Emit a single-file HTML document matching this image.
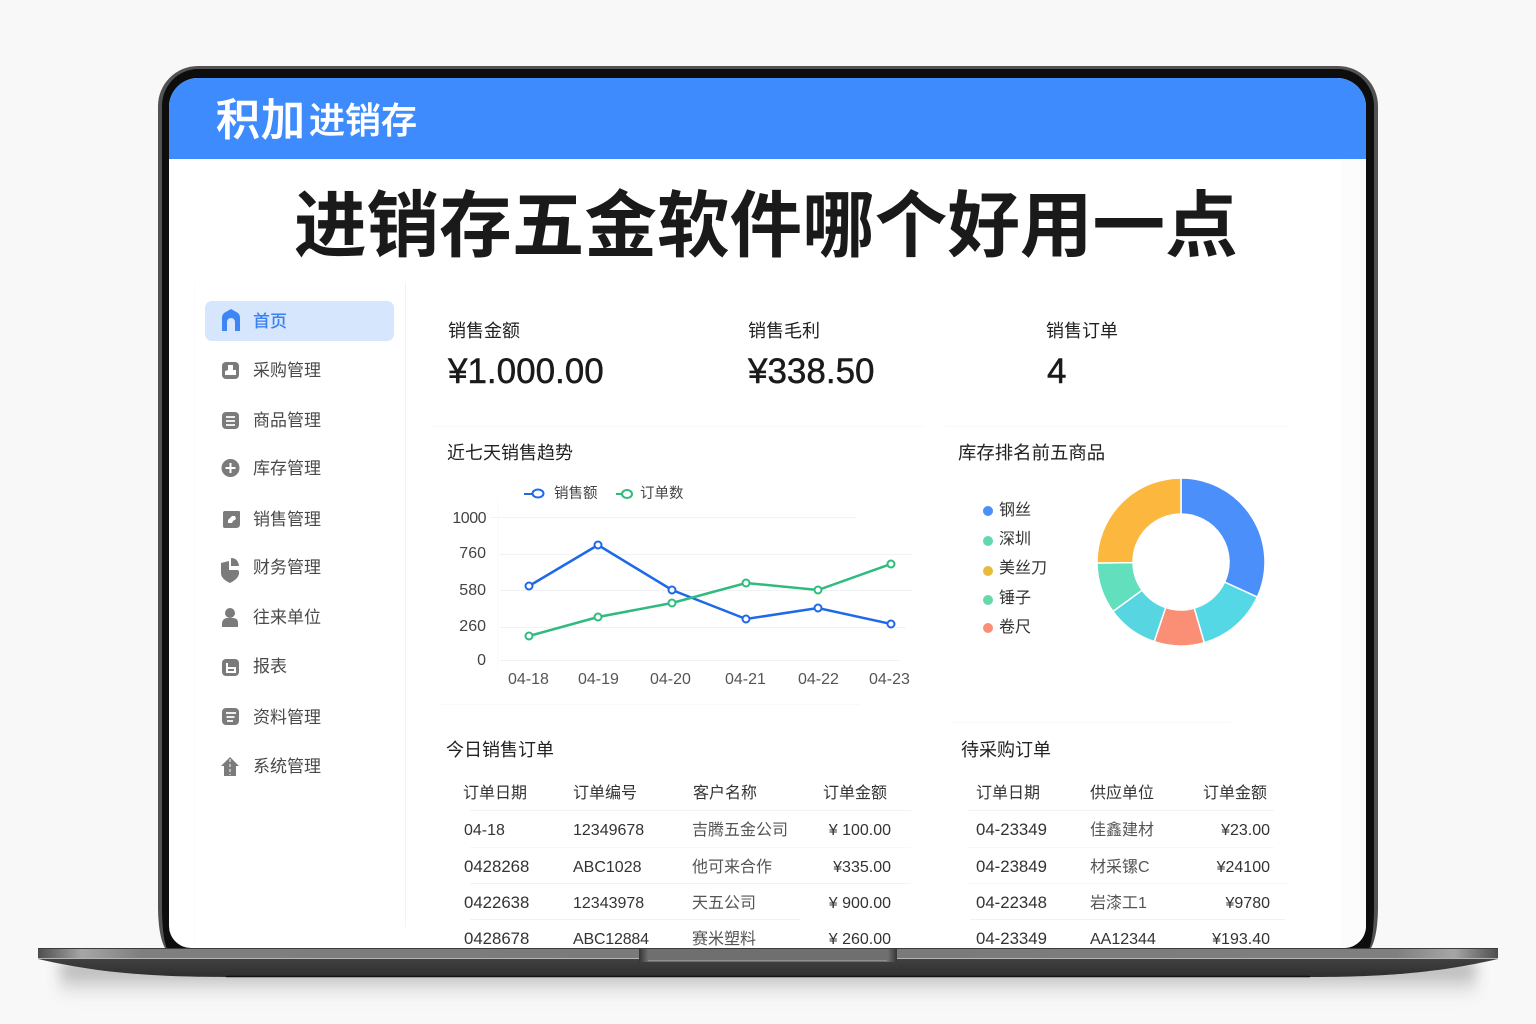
<!DOCTYPE html>
<html lang="zh-CN"><head><meta charset="utf-8"><title>进销存五金软件哪个好用一点</title>
<style>
html,body{margin:0;padding:0}
body{width:1536px;height:1024px;position:relative;overflow:hidden;background:#f8f8f8;font-family:"Liberation Sans","Noto Sans CJK SC",sans-serif}
.a{position:absolute}
.t{position:absolute;white-space:nowrap;line-height:24px;height:24px;color:#333;font-size:16px;margin-top:2px}
.n{color:#4a4a4a;font-size:17px}
.h{font-size:16px;color:#333}
.s{font-size:18px;color:#222}
.r{text-align:right}
.w{font-size:16.800px;margin-top:1px}
.d{position:absolute;height:1px;background:#f1f2f4}
svg{position:absolute;left:0;top:0}
</style></head><body>
<div class="a" style="left:60px;top:962px;width:1416px;height:38px;background:linear-gradient(#a4a4a4,#cfcfcf 45%,#f0f0f0 85%,#f8f8f8);filter:blur(7px)"></div>
<div class="a" style="left:158px;top:66px;width:1220px;height:886px;box-sizing:border-box;border-radius:40px 40px 12px 12px/40px 40px 44px 44px;background:#0d0d0d;border:4px solid #525252;border-top-width:3px;border-bottom:0"></div>
<div class="a" style="left:169px;top:78px;width:1197px;height:870px;background:#fff;border-radius:29px 29px 22px 22px;overflow:hidden">
  <div class="a" style="left:0;top:0;width:1197px;height:81px;background:#3d8bfd"></div>
  <div class="a" style="left:1172px;top:81px;width:25px;height:800px;background:#fcfcfd"></div>
  <div class="a" style="left:25px;top:204px;width:1px;height:700px;background:#fafbfc"></div>
</div>
<div class="t" style="left:216px;top:95px;height:48px;line-height:48px;font-size:44px;font-weight:500;color:#fff;letter-spacing:1px;-webkit-text-stroke:.6px #fff">积加</div>
<div class="t" style="left:309px;top:95px;height:48px;line-height:48px;font-size:36px;font-weight:500;color:#fff;-webkit-text-stroke:.4px #fff">进销存</div>
<div class="t" style="left:294px;top:180px;height:90px;line-height:90px;font-size:72.600px;font-weight:700;color:#1a1a1a">进销存五金软件哪个好用一点</div>

<div class="a" style="left:405px;top:282px;width:1px;height:645px;background:#f2f3f5"></div>
<div class="a" style="left:205px;top:301px;width:189px;height:40px;background:#d6e6fd;border-radius:7px"></div>

<svg width="1536" height="1024" viewBox="0 0 1536 1024">
  <path fill="#3d85f5" d="M222 331V318q0-3 2-5l7-4 7 4q2 2 2 5v13h-5v-9a4 4 0 0 0-8 0v9z"/>
  <g fill="#7b7b7b">
    <rect x="222" y="362" width="17" height="17" rx="4"/>
    <rect x="222" y="412" width="17" height="17" rx="4"/>
    <circle cx="230.500" cy="468" r="9"/>
    <path d="M225 511h14a1 1 0 0 1 1 1v12q0 4-4 4h-11a2 2 0 0 1-2-2v-13a2 2 0 0 1 2-2z"/>
    <path d="M221 563l8-2v9h8q2 0 2 2v2q-1 5-9 9-9-4-9-10v-8q0-2 0-2z"/><path d="M231 558q7 0 8 8h-8z"/>
    <circle cx="230" cy="613" r="5"/><path d="M222 627v-4q1-5 5-5h6q5 0 5 5v4z"/>
    <rect x="222" y="659" width="17" height="17" rx="4"/>
    <rect x="222" y="708" width="17" height="17" rx="4"/>
    <path d="M221 766l9-9 9 9-3 0v10h-12v-10z"/>
  </g>
  <g fill="none" stroke="#fff" stroke-width="2">
    <path d="M226 417h9M226 421h9M226 425h9" stroke-width="1.700"/>
    <path d="M230.500 463v10M225.500 468h10"/>
    <path d="M227 663v9h8v-4h-8" stroke-width="2"/>
    <path d="M226 713h10M226.500 717h8M227 721h6" stroke-width="1.700"/>
    <path d="M230 759v16" stroke-width="1" stroke-dasharray="3 2"/>
  </g>
  <path fill="#fff" d="M228 365h5v5h3v5h-11v-4l3-1zM228 520l4-4h3l1 3-3 2-1 2h-4z"/>

  <g fill="none" stroke="#f1f2f4" stroke-width="1">
    <path d="M490 517.500H856M500 554.500H912M500 590.500H912M500 627.500H906M500 660.500H900"/>
    <path d="M498 500V668" stroke="#f8f8f9"/>
    <path d="M440 704.500H860M432 426.500H925M945 426.500H1290M950 722.500H1230" stroke="#f9f9fa"/>
  </g>
  <path d="M529 586L598 545L672 590L746 619L818 608L891 624" fill="none" stroke="#1f69e8" stroke-width="2.500"/>
  <path d="M529 636L598 617L672 603L746 583L818 590L891 564" fill="none" stroke="#2fbb7d" stroke-width="2.500"/>
  <g fill="#fff" stroke="#1f69e8" stroke-width="2">
    <circle cx="529" cy="586" r="3.500"/><circle cx="598" cy="545" r="3.500"/><circle cx="672" cy="590" r="3.500"/><circle cx="746" cy="619" r="3.500"/><circle cx="818" cy="608" r="3.500"/><circle cx="891" cy="624" r="3.500"/>
  </g>
  <g fill="#fff" stroke="#2fbb7d" stroke-width="2">
    <circle cx="529" cy="636" r="3.500"/><circle cx="598" cy="617" r="3.500"/><circle cx="672" cy="603" r="3.500"/><circle cx="746" cy="583" r="3.500"/><circle cx="818" cy="590" r="3.500"/><circle cx="891" cy="564" r="3.500"/>
  </g>
  <path d="M524 494H536" stroke="#1f69e8" stroke-width="2"/><ellipse cx="538" cy="493.500" rx="5.500" ry="4" fill="#fff" stroke="#1f69e8" stroke-width="2"/>
  <path d="M616 494H624" stroke="#2fbb7d" stroke-width="2"/><ellipse cx="627" cy="494" rx="5" ry="4" fill="#fff" stroke="#2fbb7d" stroke-width="2"/>

  <g stroke="#fff" stroke-width="1.500">
    <path fill="#4b8ffa" d="M1181 478A84 84 0 0 1 1257.300 597.100L1224.600 582.100A48 48 0 0 0 1181 514Z"/>
    <path fill="#55d8e6" d="M1257.300 597.100A84 84 0 0 1 1204.200 642.700L1194.200 608.100A48 48 0 0 0 1224.600 582.100Z"/>
    <path fill="#fb8f76" d="M1204.200 642.700A84 84 0 0 1 1154.200 641.600L1165.700 607.500A48 48 0 0 0 1194.200 608.100Z"/>
    <path fill="#57d5e0" d="M1154.200 641.600A84 84 0 0 1 1113 611.400L1142.100 590.200A48 48 0 0 0 1165.700 607.500Z"/>
    <path fill="#62dfbd" d="M1113 611.400A84 84 0 0 1 1097 563L1133 562.600A48 48 0 0 0 1142.100 590.200Z"/>
    <path fill="#fcb73f" d="M1097 563A84 84 0 0 1 1181 478V514A48 48 0 0 0 1133 562.600Z"/>
  </g>
  <circle cx="988" cy="511" r="5" fill="#4b8ffa"/><circle cx="988" cy="541" r="5" fill="#62d8ae"/><circle cx="988" cy="571" r="5" fill="#e9bb3a"/><circle cx="988" cy="600" r="5" fill="#66d9ab"/><circle cx="988" cy="628" r="5" fill="#fb8f76"/>
</svg>

<div class="t" style="left:253px;top:308px;color:#3a80ee;font-weight:500;font-size:17px">首页</div>
<div class="t n" style="left:253px;top:357px">采购管理</div>
<div class="t n" style="left:253px;top:407px">商品管理</div>
<div class="t n" style="left:253px;top:455px">库存管理</div>
<div class="t n" style="left:253px;top:506px">销售管理</div>
<div class="t n" style="left:253px;top:554px">财务管理</div>
<div class="t n" style="left:253px;top:604px">往来单位</div>
<div class="t n" style="left:253px;top:653px">报表</div>
<div class="t n" style="left:253px;top:704px">资料管理</div>
<div class="t n" style="left:253px;top:753px">系统管理</div>

<div class="t s" style="left:448px;top:317px">销售金额</div>
<div class="t s" style="left:748px;top:317px">销售毛利</div>
<div class="t s" style="left:1046px;top:317px">销售订单</div>
<div class="t" style="left:448px;top:349px;height:42px;line-height:42px;font-size:35px;color:#1a1a1a;-webkit-text-stroke:.5px #1a1a1a">¥1.000.00</div>
<div class="t" style="left:748px;top:349px;height:42px;line-height:42px;font-size:35px;color:#1a1a1a;-webkit-text-stroke:.5px #1a1a1a">¥338.50</div>
<div class="t" style="left:1047px;top:349px;height:42px;line-height:42px;font-size:35px;color:#1a1a1a;-webkit-text-stroke:.5px #1a1a1a">4</div>

<div class="t s" style="left:447px;top:439px">近七天销售趋势</div>
<div class="t s" style="left:958px;top:439px;font-size:18.400px">库存排名前五商品</div>
<div class="t" style="left:554px;top:480px;font-size:14.500px;color:#444">销售额</div>
<div class="t" style="left:640px;top:480px;font-size:14.500px;color:#444">订单数</div>

<div class="t r" style="left:430px;width:56px;top:505px;color:#444;letter-spacing:-.5px">1000</div>
<div class="t r" style="left:430px;width:56px;top:540px;color:#444">760</div>
<div class="t r" style="left:430px;width:56px;top:577px;color:#444">580</div>
<div class="t r" style="left:430px;width:56px;top:613px;color:#444">260</div>
<div class="t r" style="left:430px;width:56px;top:647px;color:#444">0</div>
<div class="t" style="left:508px;top:666px;color:#555">04-18</div>
<div class="t" style="left:578px;top:666px;color:#555">04-19</div>
<div class="t" style="left:650px;top:666px;color:#555">04-20</div>
<div class="t" style="left:725px;top:666px;color:#555">04-21</div>
<div class="t" style="left:798px;top:666px;color:#555">04-22</div>
<div class="t" style="left:869px;top:666px;color:#555">04-23</div>

<div class="t" style="left:999px;top:497px;color:#333">钢丝</div>
<div class="t" style="left:999px;top:526px;color:#333">深圳</div>
<div class="t" style="left:999px;top:555px;color:#333">美丝刀</div>
<div class="t" style="left:999px;top:585px;color:#333">锤子</div>
<div class="t" style="left:999px;top:614px;color:#333">卷尺</div>

<div class="t s" style="left:446px;top:736px">今日销售订单</div>
<div class="t s" style="left:961px;top:736px">待采购订单</div>

<div class="t h" style="left:463px;top:780px">订单日期</div>
<div class="t h" style="left:573px;top:780px">订单编号</div>
<div class="t h" style="left:693px;top:780px">客户名称</div>
<div class="t h" style="left:823px;top:780px">订单金额</div>
<div class="d" style="left:470px;top:810px;width:441px"></div>
<div class="t" style="left:464px;top:817px">04-18</div>
<div class="t" style="left:573px;top:817px">12349678</div>
<div class="t" style="left:692px;top:817px;color:#555">吉腾五金公司</div>
<div class="t r" style="left:791px;width:100px;top:817px">¥ 100.00</div>
<div class="d" style="left:470px;top:847px;width:441px;background:#f7f8f9"></div>
<div class="t w" style="left:464px;top:854px">0428268</div>
<div class="t" style="left:573px;top:854px">ABC1028</div>
<div class="t" style="left:692px;top:854px;color:#555">他可来合作</div>
<div class="t r" style="left:791px;width:100px;top:854px">¥335.00</div>
<div class="d" style="left:470px;top:883px;width:441px"></div>
<div class="t w" style="left:464px;top:890px">0422638</div>
<div class="t" style="left:573px;top:890px">12343978</div>
<div class="t" style="left:692px;top:890px;color:#555">天五公司</div>
<div class="t r" style="left:791px;width:100px;top:890px">¥ 900.00</div>
<div class="d" style="left:470px;top:919px;width:330px"></div>
<div class="t w" style="left:464px;top:926px">0428678</div>
<div class="t" style="left:573px;top:926px;letter-spacing:-.2px">ABC12884</div>
<div class="t" style="left:692px;top:926px;color:#555">赛米塑料</div>
<div class="t r" style="left:791px;width:100px;top:926px">¥ 260.00</div>

<div class="t h" style="left:976px;top:780px">订单日期</div>
<div class="t h" style="left:1090px;top:780px">供应单位</div>
<div class="t h" style="left:1203px;top:780px">订单金额</div>
<div class="d" style="left:968px;top:810px;width:306px"></div>
<div class="t w" style="left:976px;top:817px">04-23349</div>
<div class="t" style="left:1090px;top:817px;color:#555">佳鑫建材</div>
<div class="t r" style="left:1170px;width:100px;top:817px">¥23.00</div>
<div class="d" style="left:968px;top:847px;width:306px;background:#f7f8f9"></div>
<div class="t w" style="left:976px;top:854px">04-23849</div>
<div class="t" style="left:1090px;top:854px;color:#555">材采镙C</div>
<div class="t r" style="left:1170px;width:100px;top:854px">¥24100</div>
<div class="d" style="left:968px;top:883px;width:320px;background:#f7f8f9"></div>
<div class="t w" style="left:976px;top:890px">04-22348</div>
<div class="t" style="left:1090px;top:890px;color:#555">岩漆工1</div>
<div class="t r" style="left:1170px;width:100px;top:890px">¥9780</div>
<div class="d" style="left:970px;top:919px;width:315px"></div>
<div class="t w" style="left:976px;top:926px">04-23349</div>
<div class="t" style="left:1090px;top:926px">AA12344</div>
<div class="t r" style="left:1170px;width:100px;top:926px">¥193.40</div>

<svg width="1536" height="1024" viewBox="0 0 1536 1024">
  <defs>
    <linearGradient id="b" x1="0" x2="1" y1="0" y2="0">
      <stop offset="0" stop-color="#4e4e4e"/><stop offset=".03" stop-color="#a6a6a6"/><stop offset=".07" stop-color="#7f7f7f"/><stop offset=".4" stop-color="#7a7a7a"/><stop offset=".6" stop-color="#7a7a7a"/><stop offset=".93" stop-color="#7f7f7f"/><stop offset=".97" stop-color="#a6a6a6"/><stop offset="1" stop-color="#4e4e4e"/>
    </linearGradient>
    <linearGradient id="c" x1="0" x2="0" y1="0" y2="1">
      <stop offset="0" stop-color="#4c4c4c"/><stop offset="1" stop-color="#2f2f2f"/>
    </linearGradient>
    <linearGradient id="nt" x1="0" x2="1" y1="0" y2="0">
      <stop offset="0" stop-color="#343434"/><stop offset=".035" stop-color="#6f6f6f"/><stop offset=".965" stop-color="#6f6f6f"/><stop offset="1" stop-color="#343434"/>
    </linearGradient>
  </defs>
  <path fill="url(#c)" d="M38 959V948H1498V959C1450 970 1400 977 1310 977H226C136 977 86 970 38 959Z"/>
  <rect x="38" y="948" width="1460" height="11" fill="url(#b)"/>
  <rect x="38" y="948" width="1460" height="1" fill="#3c3c3c"/>
  <rect x="38" y="958" width="1460" height="1" fill="#b4b4b4"/>
  <rect x="639" y="949" width="258" height="13" fill="url(#nt)"/>
  <rect x="648" y="960" width="239" height="1" fill="#8f8f8f"/>
  <path d="M226 976.500H1310" stroke="#111" stroke-width="1.500"/>
</svg>
</body></html>
